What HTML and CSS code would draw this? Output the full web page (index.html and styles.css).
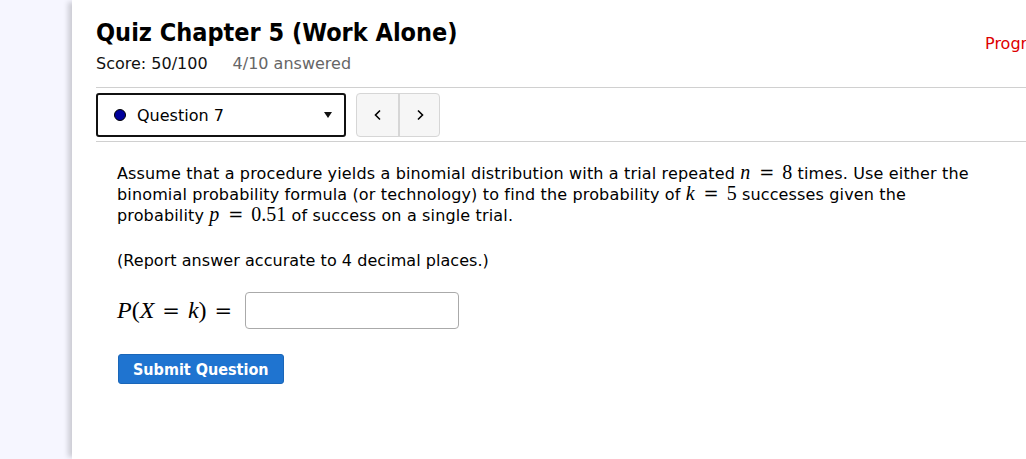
FILE: index.html
```html
<!DOCTYPE html>
<html>
<head>
<meta charset="utf-8">
<link rel="stylesheet" href="styles.css">
</head>
<body>
<div class="page">
  <aside class="side"></aside>
  <main class="main">
    <header class="head">
      <div class="head-left">
        <h1 class="title">Quiz Chapter 5 (Work Alone)</h1>
        <div class="meta"><span class="score">Score: 50/100</span><span class="answered">4/10 answered</span></div>
      </div>
      <div class="progress">Progress saved</div>
    </header>
    <nav class="nav">
      <div class="select">
        <span class="dot"></span>
        <span class="qlabel">Question 7</span>
        <span class="caret"></span>
      </div>
      <div class="arrows">
        <button class="arrow">
          <svg width="10" height="12" viewBox="0 0 10 12"><path d="M7 1.5 L2.5 6 L7 10.5" fill="none" stroke="#000" stroke-width="1.6"/></svg>
        </button>
        <button class="arrow">
          <svg width="10" height="12" viewBox="0 0 10 12"><path d="M3 1.5 L7.5 6 L3 10.5" fill="none" stroke="#000" stroke-width="1.6"/></svg>
        </button>
      </div>
    </nav>
    <section class="question">
      <p class="text">Assume that a procedure yields a binomial distribution with a trial repeated <span class="m"><i>n</i><span class="eq">=</span>8</span> times. Use either the binomial probability formula (or technology) to find the probability of <span class="m"><i>k</i><span class="eq">=</span>5</span> successes given the probability <span class="m"><i>p</i><span class="eq">=</span>0.51</span> of success on a single trial.</p>
      <p class="text report">(Report answer accurate to 4 decimal places.)</p>
      <div class="answer">
        <span class="m big"><i>P</i>(<i>X</i><span class="eq">=</span><i>k</i>)<span class="eq last">=</span></span>
        <input class="box" type="text">
      </div>
      <button class="submit">Submit Question</button>
    </section>
  </main>
</div>
</body>
</html>
```
FILE: styles.css
```css
html, body { margin: 0; padding: 0; background: #fff; }
body { font-family: "DejaVu Sans", sans-serif; color: #000; overflow: hidden; }
.page { display: flex; height: 459px; overflow: hidden; }
.side { width: 72px; flex: none; background: #f6f6ff; }
.main { flex: 1; min-width: 0; padding-left: 24px; box-shadow: -6px 0 5px -2px rgba(0,0,0,0.17); position: relative; }
.head { display: flex; justify-content: space-between; padding-top: 14px; height: 88px; box-sizing: border-box; border-bottom: 1px solid #d0d0d0; }
.title { margin: 0; font-family: "DejaVu Sans Condensed", "DejaVu Sans", sans-serif; font-size: 25px; font-weight: bold; line-height: 38px; }
.meta { font-size: 16px; line-height: 24px; }
.score { color: #111; margin-right: 25px; }
.answered { color: #666; }
.progress { color: #d00; font-size: 16px; white-space: nowrap; margin-right: -80px; padding-top: 20px; }
.nav { display: flex; gap: 10px; padding: 5px 0 4px 0; border-bottom: 1px solid #d0d0d0; }
.select { width: 250px; height: 44px; box-sizing: border-box; border: 2px solid #111; border-radius: 3px; display: flex; align-items: center; padding: 0 12px 0 16px; font-size: 16px; }
.dot { width: 12px; height: 12px; border-radius: 50%; background: #00009c; border: 1px solid #000; box-sizing: border-box; margin-right: 11px; }
.qlabel { flex: 1; }
.caret { width: 0; height: 0; border-left: 4.5px solid transparent; border-right: 4.5px solid transparent; border-top: 6px solid #111; }
.arrows { display: flex; height: 44px; border: 1px solid #d6d6d6; border-radius: 4px; background: #f6f6f6; box-sizing: border-box; }
.arrow { width: 41px; border: 0; background: transparent; display: flex; align-items: center; justify-content: center; padding: 0; }
.arrow + .arrow { border-left: 2px solid #d6d6d6; }
.question { padding: 21px 0 0 21px; }
.text { margin: 0 0 24px; font-size: 16px; line-height: 21px; width: 872px; letter-spacing: 0.15px; }
.report { margin-bottom: 21px; letter-spacing: 0.05px; }
.m { font-family: "Liberation Serif", "DejaVu Serif", serif; font-size: 20px; line-height: 16px; letter-spacing: 0; }
.m i { font-style: italic; }
.eq { font-family: "DejaVu Serif", serif; font-size: 18px; margin: 0 8px 0 9px; }
.answer { display: flex; align-items: center; gap: 13px; margin-bottom: 25px; }
.big { font-size: 24px; line-height: 30px; }
.big .eq { font-size: 21px; margin: 0 8px; }
.big .last { margin-right: 0; }
.box { width: 214px; height: 37px; box-sizing: border-box; border: 1px solid #aaa; border-radius: 4px; margin: 0; }
.submit { margin-left: 1px; background: #1f74d0; color: #fff; border: 1px solid #1a66b8; border-radius: 3px; height: 30px; padding: 0 14px; font-family: "DejaVu Sans Condensed", "DejaVu Sans", sans-serif; font-size: 16px; font-weight: bold; }
```
